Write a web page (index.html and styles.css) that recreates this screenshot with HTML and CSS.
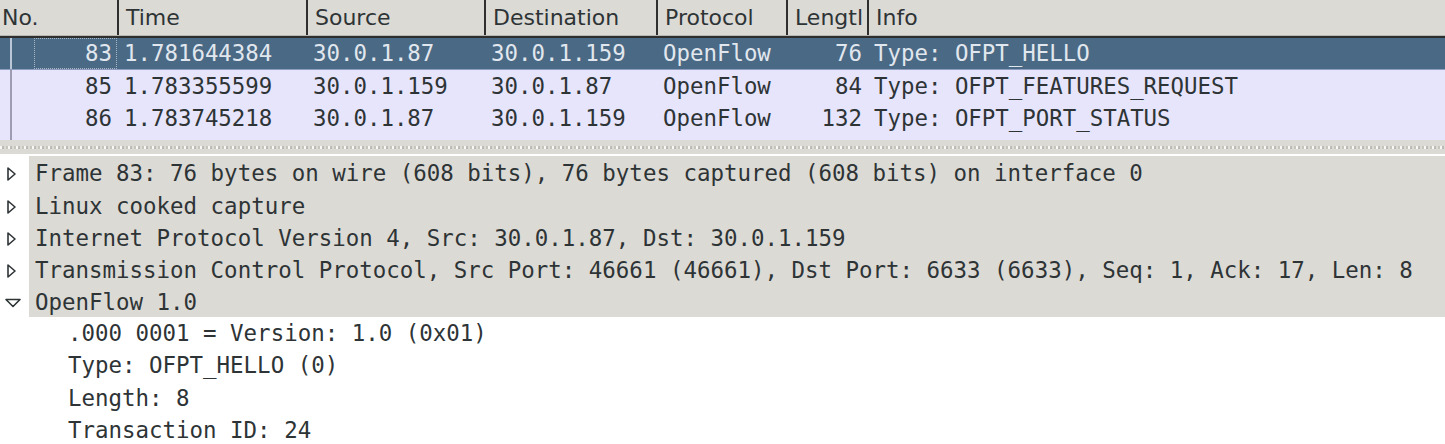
FILE: index.html
```html
<!DOCTYPE html>
<html>
<head>
<meta charset="utf-8">
<link rel="stylesheet" href="styles.css">
</head>
<body>
<div class="list">
  <div class="hdr">
    <div class="hc hc-first">No.</div>
    <div class="hc">Time</div>
    <div class="hc">Source</div>
    <div class="hc">Destination</div>
    <div class="hc">Protocol</div>
    <div class="hc">Lengtl</div>
    <div class="hc">Info</div>
  </div>
  <div class="row sel">
    <div class="c no"><span class="vline"></span><span class="focus">83</span></div>
    <div class="c">1.781644384</div>
    <div class="c">30.0.1.87</div>
    <div class="c">30.0.1.159</div>
    <div class="c">OpenFlow</div>
    <div class="c r">76</div>
    <div class="c">Type: OFPT_HELLO</div>
  </div>
  <div class="row">
    <div class="c no"><span class="vline"></span><span class="nofocus">85</span></div>
    <div class="c">1.783355599</div>
    <div class="c">30.0.1.159</div>
    <div class="c">30.0.1.87</div>
    <div class="c">OpenFlow</div>
    <div class="c r">84</div>
    <div class="c">Type: OFPT_FEATURES_REQUEST</div>
  </div>
  <div class="row">
    <div class="c no"><span class="vline"></span><span class="nofocus">86</span></div>
    <div class="c">1.783745218</div>
    <div class="c">30.0.1.87</div>
    <div class="c">30.0.1.159</div>
    <div class="c">OpenFlow</div>
    <div class="c r">132</div>
    <div class="c">Type: OFPT_PORT_STATUS</div>
  </div>
  <div class="filler"><span class="vline"></span></div>
</div>
<div class="splitter"><div class="dots"></div></div>
<div class="tree">
  <div class="tgroup">
    <div class="trow"><span class="tog"><svg width="14" height="16" viewBox="0 0 14 16"><path d="M4 2 L11 8 L4 14 Z" fill="none" stroke="#2e3436" stroke-width="1.6" stroke-linejoin="round"/></svg></span><span class="tt">Frame 83: 76 bytes on wire (608 bits), 76 bytes captured (608 bits) on interface 0</span></div>
    <div class="trow"><span class="tog"><svg width="14" height="16" viewBox="0 0 14 16"><path d="M4 2 L11 8 L4 14 Z" fill="none" stroke="#2e3436" stroke-width="1.6" stroke-linejoin="round"/></svg></span><span class="tt">Linux cooked capture</span></div>
    <div class="trow"><span class="tog"><svg width="14" height="16" viewBox="0 0 14 16"><path d="M4 2 L11 8 L4 14 Z" fill="none" stroke="#2e3436" stroke-width="1.6" stroke-linejoin="round"/></svg></span><span class="tt">Internet Protocol Version 4, Src: 30.0.1.87, Dst: 30.0.1.159</span></div>
    <div class="trow"><span class="tog"><svg width="14" height="16" viewBox="0 0 14 16"><path d="M4 2 L11 8 L4 14 Z" fill="none" stroke="#2e3436" stroke-width="1.6" stroke-linejoin="round"/></svg></span><span class="tt">Transmission Control Protocol, Src Port: 46661 (46661), Dst Port: 6633 (6633), Seq: 1, Ack: 17, Len: 8</span></div>
    <div class="trow"><span class="tog"><svg width="18" height="12" viewBox="0 0 18 12"><path d="M2 2.5 L16 2.5 L9 9.5 Z" fill="none" stroke="#2e3436" stroke-width="1.6" stroke-linejoin="round"/></svg></span><span class="tt">OpenFlow 1.0</span></div>
  </div>
  <div class="children">
    <div class="crow">.000 0001 = Version: 1.0 (0x01)</div>
    <div class="crow">Type: OFPT_HELLO (0)</div>
    <div class="crow">Length: 8</div>
    <div class="crow">Transaction ID: 24</div>
  </div>
</div>
</body>
</html>
```

FILE: styles.css
```css
html, body {
  margin: 0;
  padding: 0;
  background: #ffffff;
  width: 1445px;
  height: 444px;
  overflow: hidden;
}

.list {
  background: #e6e5fb;
}

.hdr {
  display: grid;
  grid-template-columns: 117px 189px 178px 172px 130px 81px 1fr;
  height: 35px;
  background: #dcdad5;
  border-bottom: 1px solid #b9b7b1;
  box-shadow: 0 2px 0 #2e2e2e;
  margin-bottom: 2px;
  font-family: "DejaVu Sans", sans-serif;
  font-size: 22px;
  color: #2e3436;
}

.hc {
  border-left: 2px solid #2f2f2f;
  padding-left: 7px;
  line-height: 35px;
  white-space: nowrap;
  overflow: hidden;
}

.hc-first {
  border-left: none;
  padding-left: 2px;
}

.row {
  display: grid;
  grid-template-columns: 117px 189px 178px 172px 130px 81px 1fr;
  height: 32px;
  font-family: "DejaVu Sans Mono", monospace;
  font-size: 22.4px;
  line-height: 32px;
  color: #2e3436;
}

.row.sel {
  background: #4a6984;
  color: #e1e7ee;
  height: 31px;
  line-height: 31px;
  border-bottom: 1px solid #8e9cc0;
}

.c {
  padding-left: 7px;
  white-space: nowrap;
  overflow: hidden;
}

.c.r {
  text-align: right;
  padding-left: 0;
  padding-right: 5px;
}

.c.no {
  display: flex;
  padding-left: 0;
}

.vline {
  display: block;
  width: 2px;
  margin-left: 10px;
  background: #9c9cb2;
  flex: none;
}

.sel .vline {
  background: #b9c7d6;
}

.focus, .nofocus {
  flex: 1;
  margin-left: 22px;
  text-align: right;
  padding-right: 5px;
  box-sizing: border-box;
}

.focus {
  outline: 1px dotted #a9b6c3;
  outline-offset: -1px;
}

.filler {
  height: 6px;
  display: flex;
}

.splitter {
  height: 14px;
  background: #dcdad5;
  display: flex;
  flex-direction: column;
  justify-content: center;
}

.dots {
  height: 3px;
  background:
    repeating-linear-gradient(90deg, #f7f7f5 0 2px, #bdbbb5 2px 4px, #dcdad5 4px 6px, #c7c5bf 6px 8px);
}

.tree {
  font-family: "DejaVu Sans Mono", monospace;
  font-size: 22.45px;
  color: #2e3436;
}

.tgroup {
  padding-top: 2px;
}

.trow {
  display: flex;
  height: 32px;
  line-height: 34px;
}

.tgroup .trow:first-child {
  height: 33px;
  line-height: 35px;
}

.tog {
  width: 29px;
  flex: none;
  display: flex;
  align-items: center;
  justify-content: flex-start;
  padding-left: 4px;
  padding-top: 3px;
  box-sizing: border-box;
  background: #ffffff;
}

.tt {
  flex: 1;
  background: #dcdad5;
  padding-left: 6px;
  white-space: nowrap;
}

.tgroup .trow:last-child {
  height: 32px;
}

.children {
  padding-left: 68px;
}

.crow {
  height: 32.3px;
  line-height: 33px;
  white-space: nowrap;
}
```
